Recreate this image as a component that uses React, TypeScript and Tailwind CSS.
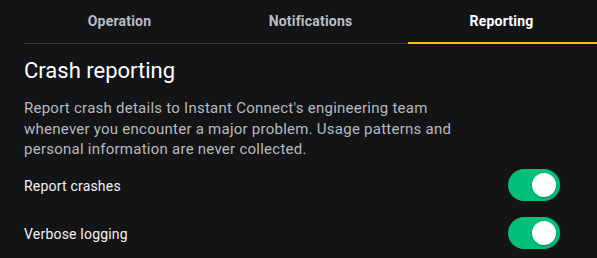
import React from "react";

function Toggle() {
  return (
    <div className="w-[52px] h-[32px] rounded-full bg-[#00bf78] flex items-center justify-end pr-[4px]">
      <div className="w-[24px] h-[24px] rounded-full bg-white shadow-[0_1px_2px_rgba(0,0,0,0.3)]" />
    </div>
  );
}

export default function App() {
  return (
    <div className="w-[597px] h-[258px] bg-[#131416] overflow-hidden" style={{ fontFamily: "Roboto, 'Liberation Sans', sans-serif" }}>
      <div className="ml-[24px] flex border-b border-[#3a3b3d] h-[44px]">
        <div className="w-[191px] flex items-center justify-center text-[14px] font-bold tracking-[0.2px] text-[#b8bec6]">Operation</div>
        <div className="w-[191px] flex items-center justify-center text-[14px] font-bold tracking-[0.2px] text-[#b8bec6]">Notifications</div>
        <div className="w-[191px] relative flex items-center justify-center text-[14px] font-bold tracking-[0.2px] text-white">
          Reporting
          <div className="absolute left-[2px] right-[-24px] bottom-[-1px] h-[2px] bg-[#f7c100]" />
        </div>
      </div>
      <div className="pl-[24px] pr-[37px]">
        <div className="mt-[12px] text-[22px] leading-[30px] text-white">Crash reporting</div>
        <p className="mt-[12px] text-[15px] leading-[20.5px] tracking-[0.25px] text-[#b6babf] w-[440px]">
          Report crash details to Instant Connect's engineering team whenever you encounter a major problem. Usage patterns and personal information are never collected.
        </p>
        <div className="mt-[1px] flex items-center justify-between h-[48px]">
          <span className="text-[14px] tracking-[0.2px] pt-[3px] text-[#f2f2f2]">Report crashes</span>
          <Toggle />
        </div>
        <div className="flex items-center justify-between h-[48px]">
          <span className="text-[14px] tracking-[0.2px] pt-[3px] text-[#f2f2f2]">Verbose logging</span>
          <Toggle />
        </div>
      </div>
    </div>
  );
}
